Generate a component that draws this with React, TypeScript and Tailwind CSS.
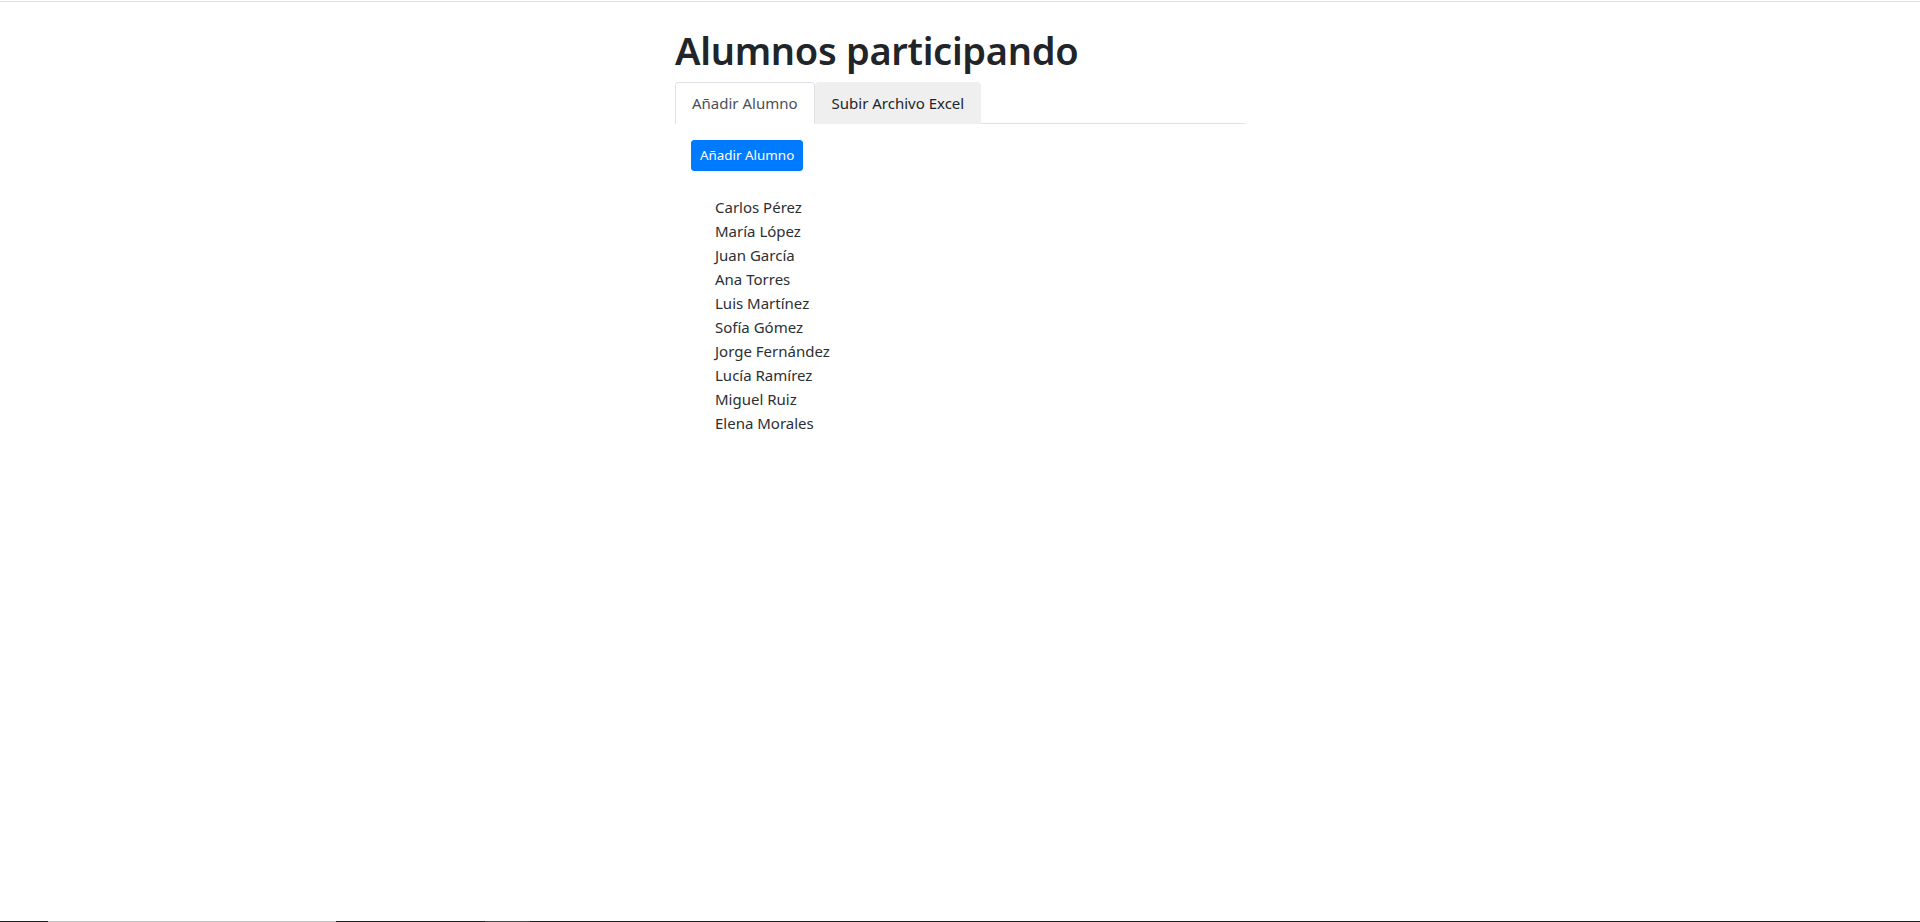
import React from "react";

const alumnos = [
  "Carlos Pérez",
  "María López",
  "Juan García",
  "Ana Torres",
  "Luis Martínez",
  "Sofía Gómez",
  "Jorge Fernández",
  "Lucía Ramírez",
  "Miguel Ruiz",
  "Elena Morales",
];

export default function App() {
  return (
    <div
      className="flex h-[922px] flex-col bg-white text-[#212529]"
      style={{ fontFamily: '"Noto Sans", "Open Sans", sans-serif' }}
    >
      <div className="mt-px h-px w-full bg-[#e3e3e3]" />
      <div className="flex-1">
        <div className="mx-auto w-full max-w-[600px] px-[15px] pt-[24px]">
          <h1 className="mb-2 text-[38px] font-semibold leading-[48px] tracking-[-0.3px] text-[#212529]">
            Alumnos participando
          </h1>
          <div className="flex border-b border-[#dee2e6]">
            <button className="-mb-px h-[42px] rounded-t-[4px] border border-[#dee2e6] border-b-white bg-white px-4 text-[15px] leading-6 text-[#495057]">
              Añadir Alumno
            </button>
            <button className="-mb-px h-[42px] rounded-t-[4px] border border-transparent bg-[#efefef] px-4 text-[15px] leading-6 text-[#212529]">
              Subir Archivo Excel
            </button>
          </div>
          <div className="p-4">
            <button className="rounded-[3px] border border-[#007bff] bg-[#007bff] px-2 py-1 text-[13.4px] leading-[21px] text-white">
              Añadir Alumno
            </button>
          </div>
          <ul className="mt-[8px] pl-10 text-[15px] leading-6 text-[#2b2f33]">
            {alumnos.map((a) => (
              <li key={a}>{a}</li>
            ))}
          </ul>
        </div>
      </div>
      <div className="flex h-px w-full">
        <div className="w-[48px] bg-[#1e1e1e]" />
        <div className="w-[288px] bg-[#c4c4c4]" />
        <div className="w-[149px] bg-[#1e1e1e]" />
        <div className="w-[45px] bg-[#4a4a4a]" />
        <div className="flex-1 bg-[#1e1e1e]" />
      </div>
    </div>
  );
}
